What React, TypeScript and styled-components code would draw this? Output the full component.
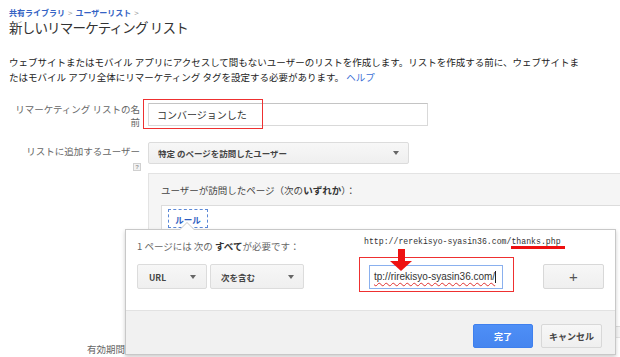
import React from 'react'
import styled, { createGlobalStyle } from 'styled-components'

const GlobalStyle = createGlobalStyle`
  html, body {
    margin: 0;
    padding: 0;
    background: #fff;
  }
  body {
    font-family: 'Noto Sans CJK JP', 'Noto Sans', sans-serif;
    color: #222;
  }
`

const Page = styled.div`
  position: relative;
  width: 620px;
  height: 357px;
  overflow: hidden;
`

const Header = styled.header`
  padding: 8px 0 0 9px;
`

const Breadcrumb = styled.nav`
  display: flex;
  align-items: center;
  gap: 3px;
  font-size: 8px;
  line-height: 10px;
  font-weight: 700;
`

const Crumb = styled.a`
  color: #3563c4;
  text-decoration: none;
`

const Sep = styled.span`
  color: #999;
  font-weight: 400;
`

const Title = styled.h1`
  margin: 0;
  font-size: 13.5px;
  line-height: 18px;
  font-weight: 400;
  letter-spacing: -0.8px;
  color: #333;
`

const Intro = styled.p`
  margin: 19px 0 0;
  font-size: 9.5px;
  line-height: 15px;
  white-space: nowrap;
  color: #222;
`

const HelpLink = styled.a`
  color: #3b6fd6;
  text-decoration: none;
`

const Form = styled.div`
  padding-left: 9px;
`

const Row = styled.div<{ $top: number }>`
  display: flex;
  align-items: flex-start;
  margin-top: ${p => p.$top}px;
`

const LabelCol = styled.div<{ $inset?: number }>`
  width: 131px;
  flex: none;
  display: flex;
  flex-direction: column;
  align-items: flex-end;
  box-sizing: border-box;
  padding: 2.5px ${p => p.$inset ?? 0}px 0 0;
`

const Label = styled.label`
  font-size: 9.5px;
  line-height: 13px;
  text-align: right;
  color: #666;
  white-space: nowrap;
`

const HelpIcon = styled.span`
  margin-top: 5.5px;
  margin-right: -1px;
  width: 8px;
  height: 8px;
  box-sizing: border-box;
  border: 1px solid #d0d0d0;
  background: #f2f2f2;
  color: #999;
  font-size: 6px;
  line-height: 6px;
  font-weight: 700;
  text-align: center;
  font-family: 'Liberation Sans', sans-serif;
`

const ControlCol = styled.div`
  margin-left: 8px;
  flex: 1;
  min-width: 0;
`

const Marked = styled.div`
  position: relative;
  display: inline-block;
`

const RedFrame = styled.span<{ $l: number; $t: number; $w: number; $h: number }>`
  position: absolute;
  left: ${p => p.$l}px;
  top: ${p => p.$t}px;
  width: ${p => p.$w}px;
  height: ${p => p.$h}px;
  box-sizing: border-box;
  border: 1px solid #ee3030;
  pointer-events: none;
`

const NameInput = styled.div`
  width: 280px;
  height: 23px;
  box-sizing: border-box;
  border: 1px solid #d9d9d9;
  border-top-color: #c4c4c4;
  padding: 0 8px;
  display: flex;
  align-items: center;
  font-size: 10px;
  color: #333;
`

const Select = styled.div<{ $w: number; $h: number; $pl: number; $pr: number }>`
  width: ${p => p.$w}px;
  height: ${p => p.$h}px;
  flex: none;
  box-sizing: border-box;
  display: flex;
  align-items: center;
  justify-content: space-between;
  padding: 0 ${p => p.$pr}px 0 ${p => p.$pl}px;
  border: 1px solid #dcdcdc;
  border-radius: 2px;
  background: linear-gradient(#f7f7f7, #efefef);
  font-size: 8.5px;
  font-weight: 700;
  color: #444;
  white-space: nowrap;
`

const Caret = styled.span`
  width: 0;
  height: 0;
  border-left: 3px solid transparent;
  border-right: 3px solid transparent;
  border-top: 4px solid #666;
`

const Panel = styled.div`
  margin-top: 9px;
  width: 490px;
  border: 1px solid #e3e3e3;
  background: #f5f5f5;
  padding: 9px 12px 10px;
`

const PanelHeading = styled.div`
  font-size: 9.5px;
  line-height: 14px;
  color: #444;
  margin-bottom: 8px;
  white-space: nowrap;
`

const Strong = styled.b`
  font-weight: 700;
  color: #333;
`

const RuleBox = styled.div`
  position: relative;
  display: flex;
  align-items: flex-start;
  height: 122px;
  box-sizing: border-box;
  padding: 3px 6px;
  border: 1px solid #dcdcdc;
  background: #fff;
`

const RuleTab = styled.span`
  display: flex;
  align-items: center;
  justify-content: center;
  width: 40px;
  height: 19px;
  box-sizing: border-box;
  border: 1px dashed #5b88d6;
  font-size: 8.5px;
  line-height: 10px;
  font-weight: 700;
  color: #2c5cc0;
`

const Popup = styled.div`
  position: absolute;
  left: -37px;
  top: 23px;
  width: 491px;
  height: 126px;
  box-sizing: border-box;
  border: 1px solid #c8c8c8;
  background: #fff;
  box-shadow: 0 2px 4px rgba(0, 0, 0, 0.2);
  display: flex;
  flex-direction: column;

  &::before,
  &::after {
    content: '';
    position: absolute;
    width: 0;
    height: 0;
    border-left: 8px solid transparent;
    border-right: 8px solid transparent;
  }
  &::before {
    left: 53px;
    top: -8px;
    border-bottom: 8px solid #c8c8c8;
  }
  &::after {
    left: 54px;
    top: -7px;
    border-left-width: 7px;
    border-right-width: 7px;
    border-bottom: 7px solid #fff;
  }
`

const PopupBody = styled.div`
  height: 71px;
  flex: none;
  padding: 9px 11px 0;
`

const RequireLine = styled.div`
  display: flex;
  align-items: flex-start;
  height: 14px;
`

const RequireText = styled.span`
  width: 227px;
  flex: none;
  font-size: 9.5px;
  line-height: 14px;
  color: #666;
  white-space: nowrap;
`

const UrlNote = styled.span`
  margin-top: -3px;
  font-family: 'Liberation Mono', 'DejaVu Sans Mono', monospace;
  font-size: 8.2px;
  line-height: 11px;
  color: #333;
  white-space: nowrap;
`

const UrlMark = styled.span`
  border-bottom: 3px solid #ee1010;
  padding-right: 4px;
`

const RuleFields = styled.div`
  display: flex;
  align-items: center;
  gap: 3px;
  margin-top: 11px;
`

const ValueWrap = styled(Marked)`
  margin-left: 62px;
`

const ValueInput = styled.div`
  width: 134px;
  height: 24px;
  box-sizing: border-box;
  border: 1px solid #8ab0ee;
  padding: 0 4px;
  display: flex;
  align-items: center;
  font-family: 'Liberation Sans', sans-serif;
  font-size: 10px;
  color: #333;
  white-space: nowrap;
`

const Misspelled = styled.span`
  text-decoration: underline wavy #e03030;
  text-decoration-thickness: 1px;
  text-underline-offset: 2px;
`

const TextCursor = styled.span`
  width: 1px;
  height: 12px;
  background: #222;
`

const ArrowMark = styled.svg`
  position: absolute;
  left: 21px;
  top: -16px;
`

const Button = styled.button<{ $primary?: boolean; $w: number; $h: number }>`
  width: ${p => p.$w}px;
  height: ${p => p.$h}px;
  box-sizing: border-box;
  padding: 0;
  border-radius: 2px;
  font-family: 'Noto Sans CJK JP', sans-serif;
  font-weight: 700;
  font-size: 9px;
  border: 1px solid ${p => (p.$primary ? '#3f80ee' : '#d8d8d8')};
  background: ${p =>
    p.$primary ? 'linear-gradient(#4e8ff6, #4685ef)' : 'linear-gradient(#f7f7f7, #efefef)'};
  color: ${p => (p.$primary ? '#fff' : '#444')};
`

const PlusButton = styled(Button)`
  margin-left: 37px;
  font-family: 'Liberation Sans', sans-serif;
  font-weight: 400;
  font-size: 15px;
  color: #555;
`

const PopupFooter = styled.div`
  flex: 1;
  display: flex;
  justify-content: flex-end;
  align-items: flex-start;
  gap: 8px;
  padding: 13px 13px 0;
  border-top: 1px solid #e2e2e2;
  background: #f1f1f1;
`

const App: React.FC = () => {
  return (
    <>
      <GlobalStyle />
      <Page>
        <Header>
          <Breadcrumb>
            <Crumb>共有ライブラリ</Crumb>
            <Sep>&gt;</Sep>
            <Crumb>ユーザーリスト</Crumb>
            <Sep>&gt;</Sep>
          </Breadcrumb>
          <Title>新しいリマーケティング リスト</Title>
          <Intro>
            ウェブサイトまたはモバイル アプリにアクセスして間もないユーザーのリストを作成します。リストを作成する前に、ウェブサイトま
            <br />
            たはモバイル アプリ全体にリマーケティング タグを設定する必要があります。 <HelpLink>ヘルプ</HelpLink>
          </Intro>
        </Header>

        <Form>
          <Row $top={15}>
            <LabelCol>
              <Label>
                リマーケティング リストの名
                <br />前
              </Label>
            </LabelCol>
            <ControlCol>
              <Marked>
                <NameInput>コンバージョンした</NameInput>
                <RedFrame $l={-5} $t={-4} $w={120} $h={30} />
              </Marked>
            </ControlCol>
          </Row>

          <Row $top={13.5}>
            <LabelCol>
              <Label>リストに追加するユーザー</Label>
              <HelpIcon>?</HelpIcon>
            </LabelCol>
            <ControlCol>
              <Select $w={261} $h={22} $pl={9} $pr={9}>
                特定 のページを訪問したユーザー
                <Caret />
              </Select>
              <Panel>
                <PanelHeading>
                  ユーザーが訪問したページ（次の<Strong>いずれか</Strong>）：
                </PanelHeading>
                <RuleBox>
                  <RuleTab>ルール</RuleTab>
                  <Popup>
                    <PopupBody>
                      <RequireLine>
                        <RequireText>
                          1 ページには 次の <Strong>すべて</Strong>が必要です：
                        </RequireText>
                        <UrlNote>
                          http://rerekisyo-syasin36.com/<UrlMark>thanks.php</UrlMark>
                        </UrlNote>
                      </RequireLine>
                      <RuleFields>
                        <Select $w={70} $h={25} $pl={11} $pr={10}>
                          URL
                          <Caret />
                        </Select>
                        <Select $w={94} $h={25} $pl={10} $pr={9}>
                          次を含む
                          <Caret />
                        </Select>
                        <ValueWrap>
                          <ValueInput>
                            <Misspelled>tp://rirekisyo-syasin36.com/</Misspelled>
                            <TextCursor />
                          </ValueInput>
                          <RedFrame $l={-10} $t={-8} $w={155} $h={35} />
                          <ArrowMark width="22" height="22" viewBox="0 0 22 22">
                            <rect x="8" y="0" width="7" height="13" fill="#ee1111" />
                            <polygon points="0,12 22,12 11,22" fill="#ee1111" />
                          </ArrowMark>
                        </ValueWrap>
                        <PlusButton $w={64} $h={25}>+</PlusButton>
                      </RuleFields>
                    </PopupBody>
                    <PopupFooter>
                      <Button $primary $w={60} $h={24}>
                        完了
                      </Button>
                      <Button $w={61} $h={24}>
                        キャンセル
                      </Button>
                    </PopupFooter>
                  </Popup>
                </RuleBox>
              </Panel>
            </ControlCol>
          </Row>

          <Row $top={2}>
            <LabelCol $inset={15}>
              <Label>有効期間</Label>
            </LabelCol>
          </Row>
        </Form>
      </Page>
    </>
  )
}

export default App
